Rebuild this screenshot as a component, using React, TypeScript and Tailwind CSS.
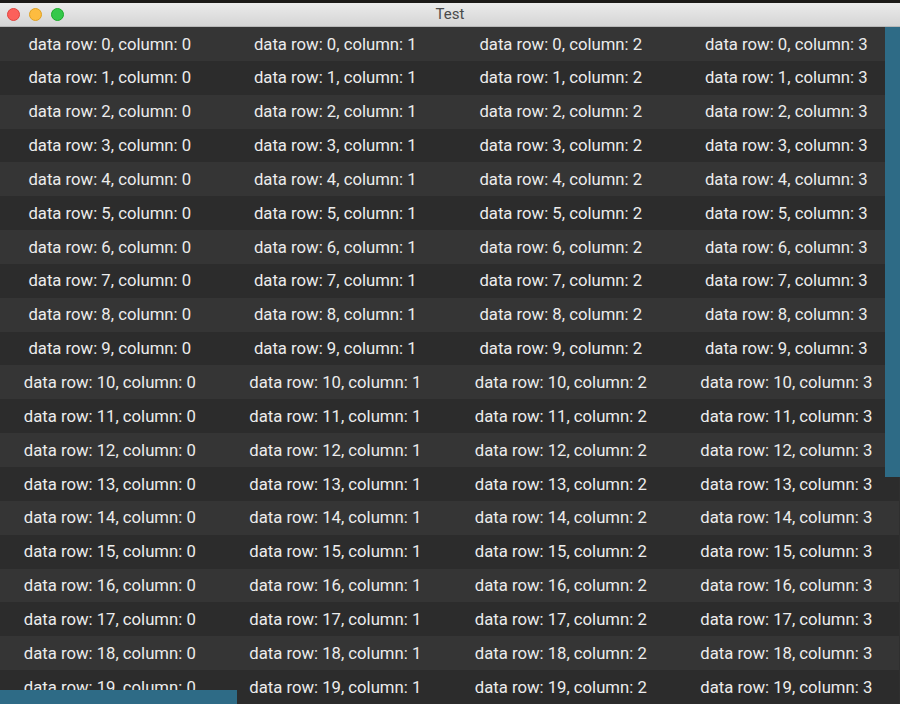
const rows = Array.from({ length: 20 }, (_, i) => i);
const cols = [0, 1, 2, 3];

function TrafficLights() {
  return (
    <div className="flex items-center gap-[9px] pl-[7px]">
      <span className="h-[13px] w-[13px] rounded-full border border-[#e0443e] bg-[#fc605b]" />
      <span className="h-[13px] w-[13px] rounded-full border border-[#dea123] bg-[#fdbc40]" />
      <span className="h-[13px] w-[13px] rounded-full border border-[#1aab29] bg-[#34c84a]" />
    </div>
  );
}

export default function App() {
  return (
    <div
      className="relative h-[704px] w-[900px] overflow-hidden bg-[#2f2f2f]"
      style={{ fontFamily: "Roboto, 'Liberation Sans', sans-serif" }}
    >
      <div className="h-[3px] bg-[#1c1a18]" />
      <div className="relative flex h-[24px] items-center border-b border-[#b8b8b8] bg-gradient-to-b from-[#ebebeb] to-[#d5d5d5]">
        <TrafficLights />
        <span className="absolute left-0 right-0 text-center text-[15px] text-[#4a4a4a]">
          Test
        </span>
      </div>
      <div className="ml-[-3px] w-[902px]">
        {rows.map((r) => (
          <div
            key={r}
            className={`grid h-[33.85px] grid-cols-4 items-center pt-[2px] ${
              r % 2 === 0 ? "bg-[#353535]" : "bg-[#2c2c2c]"
            }`}
          >
            {cols.map((c) => (
              <span key={c} className="text-center text-[16.7px] leading-none text-[#ececec]">
                data row: {r}, column: {c}
              </span>
            ))}
          </div>
        ))}
      </div>
      {/* scrollbars */}
      <div className="absolute right-0 top-[27px] h-[450px] w-[15px] bg-[#2e6b86]" />
      <div className="absolute bottom-0 left-0 h-[14px] w-[237px] bg-[#2e6b86]" />
    </div>
  );
}
